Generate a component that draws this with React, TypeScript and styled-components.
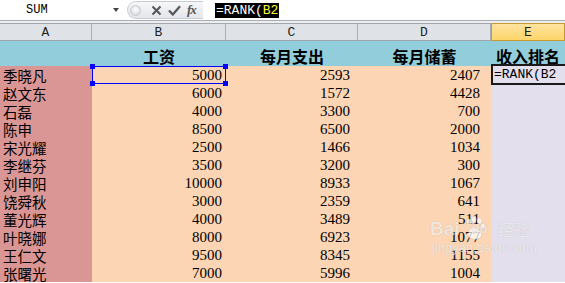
import React from "react";
import styled, { createGlobalStyle } from "styled-components";

const Global = createGlobalStyle`
  html, body { margin: 0; padding: 0; background: #fff; overflow: hidden; }
  body { width: 565px; height: 283px; font-family: "Noto Sans CJK SC", "Liberation Sans", sans-serif; }
`;

const Page = styled.div`
  width: 565px;
  height: 283px;
  overflow: hidden;
  position: relative;
  display: flex;
  flex-direction: column;
`;

const FormulaBar = styled.div`
  height: 20px;
  display: flex;
  align-items: center;
  background: #fff;
  border-bottom: 1px solid #a9acb1;
`;

const NameBox = styled.div`
  width: 125px;
  height: 20px;
  display: flex;
  align-items: center;
  justify-content: space-between;
  padding: 0 6px 0 26px;
  box-sizing: border-box;
  font-family: "Liberation Mono", monospace;
  font-size: 12px;
  color: #000;
`;

const Arrow = styled.span`
  width: 0;
  height: 0;
  border-left: 3.5px solid transparent;
  border-right: 3.5px solid transparent;
  border-top: 4px solid #444;
`;

const Pill = styled.div`
  width: 76px;
  height: 18px;
  margin-left: 2px;
  border-radius: 9px 0 0 9px;
  background: linear-gradient(#f6f7f9, #e3e6ea);
  border: 1px solid #c8ccd2;
  border-right: none;
  display: flex;
  align-items: center;
  box-sizing: border-box;
  padding-left: 2px;
  gap: 6px;
`;

const Knob = styled.span`
  width: 11px;
  height: 11px;
  border-radius: 50%;
  background: radial-gradient(circle at 50% 40%, #fff, #cfd3d8);
  border: 1px solid #c5c9ce;
  box-sizing: border-box;
  margin-right: 4px;
`;

const Fx = styled.span`
  font-family: "Liberation Serif", serif;
  font-style: italic;
  font-weight: bold;
  font-size: 13px;
  color: #555;
  letter-spacing: -1px;
`;

const FormulaInput = styled.div`
  flex: 1;
  height: 20px;
  display: flex;
  align-items: center;
  padding-left: 12px;
`;

const Highlight = styled.span`
  background: #000;
  color: #fff;
  font-family: "Liberation Mono", monospace;
  font-size: 13px;
  line-height: 15px;
  padding: 0 1px;
`;

const Ref = styled.span`
  color: #ffff3a;
`;

const Strip = styled.div`
  height: 2px;
  background: #eceef1;
`;

const cols = "92px 134px 132px 133px 74px";

const ColHeaderRow = styled.div`
  display: grid;
  grid-template-columns: ${cols};
  height: 16px;
  border-top: 1px solid #a3a7ad;
  border-bottom: 1px solid #9ea4ab;
  background: #dfe3e8;
`;

const ColHeader = styled.div<{ $active?: boolean }>`
  display: flex;
  align-items: center;
  justify-content: center;
  font-family: "Liberation Mono", monospace;
  font-size: 13px;
  color: #222;
  border-right: 1px solid #a9aeb5;
  box-sizing: border-box;
  background: ${(p) => (p.$active ? "linear-gradient(#fde3a0, #fdd56a)" : "transparent")};
  ${(p) => (p.$active ? "border: 1px solid #c89b32; margin-top: -1px; height: 18px;" : "")}
`;

const Sheet = styled.div`
  position: relative;
  display: grid;
  grid-template-columns: ${cols};
  grid-template-rows: 25px repeat(12, 18px);
`;

const TitleCell = styled.div`
  background: #92cddc;
  display: flex;
  align-items: flex-end;
  justify-content: center;
  font-weight: bold;
  font-size: 16px;
  line-height: 18px;
  color: #000;
  padding-bottom: 1px;
  white-space: nowrap;
`;

const NameCell = styled.div`
  background: #da9694;
  display: flex;
  align-items: flex-end;
  padding-left: 3px;
  font-size: 14.5px;
  line-height: 17px;
  color: #000;
`;

const NumCell = styled.div<{ $pad: number }>`
  background: #fcd5b4;
  display: flex;
  align-items: flex-end;
  justify-content: flex-end;
  padding-right: ${(p) => p.$pad}px;
  padding-bottom: 1px;
  font-family: "Liberation Serif", serif;
  font-size: 15px;
  line-height: 15px;
  color: #000;
`;

const RankCell = styled.div`
  background: #e4dfec;
`;

const Selection = styled.div`
  position: absolute;
  left: 92px;
  top: 25px;
  width: 134px;
  height: 18px;
  box-sizing: border-box;
  border: 1.5px solid #0000ff;
`;

const Handle = styled.span<{ $x: "l" | "r"; $y: "t" | "b" }>`
  position: absolute;
  width: 5px;
  height: 5px;
  background: #0000ff;
  ${(p) => (p.$x === "l" ? "left: -3px;" : "right: -3px;")}
  ${(p) => (p.$y === "t" ? "top: -3px;" : "bottom: -3px;")}
`;

const Editor = styled.div`
  position: absolute;
  left: 491px;
  top: 23px;
  width: 76px;
  height: 21px;
  box-sizing: border-box;
  border: 2px solid #1a1a1a;
  background: #e4dfec;
  font-family: "Liberation Mono", monospace;
  font-size: 13px;
  line-height: 17px;
  padding-left: 1px;
  color: #000;
  white-space: nowrap;
`;

const Watermark = styled.div`
  position: absolute;
  left: 430px;
  top: 216px;
  display: flex;
  flex-direction: column;
  align-items: flex-start;
  color: rgba(255, 255, 255, 0.7);
  text-shadow: 0 0 1px rgba(0, 0, 0, 0.2);
  pointer-events: none;
`;

const WmTop = styled.div`
  display: flex;
  align-items: flex-end;
  gap: 4px;
  font-family: "Liberation Sans", sans-serif;
  font-weight: bold;
  font-size: 19px;
  line-height: 22px;
`;

const WmDu = styled.span`
  margin-left: -18px;
  font-size: 13px;
`;

const WmCn = styled.span`
  font-family: "Noto Sans CJK SC", sans-serif;
  font-size: 16px;
  font-weight: normal;
  margin-left: 6px;
`;

const WmUrl = styled.div`
  font-family: "Liberation Sans", sans-serif;
  font-size: 13px;
  line-height: 16px;
  margin-left: 2px;
`;

const data: [string, number, number, number][] = [
  ["季晓凡", 5000, 2593, 2407],
  ["赵文东", 6000, 1572, 4428],
  ["石磊", 4000, 3300, 700],
  ["陈申", 8500, 6500, 2000],
  ["宋光耀", 2500, 1466, 1034],
  ["李继芬", 3500, 3200, 300],
  ["刘申阳", 10000, 8933, 1067],
  ["饶舜秋", 3000, 2359, 641],
  ["董光辉", 4000, 3489, 511],
  ["叶晓娜", 8000, 6923, 1077],
  ["王仁文", 9500, 8345, 1155],
  ["张曙光", 7000, 5996, 1004],
];

export default function App() {
  return (
    <Page>
      <Global />
      <FormulaBar>
        <NameBox>
          <span>SUM</span>
          <Arrow />
        </NameBox>
        <Pill>
          <Knob />
          <svg width="11" height="11" viewBox="0 0 11 11">
            <path d="M1.5 1.5 L9.5 9.5 M9.5 1.5 L1.5 9.5" stroke="#555" strokeWidth="2" />
          </svg>
          <svg width="13" height="11" viewBox="0 0 13 11">
            <path d="M1 5.5 L4.8 9.5 L12 1.2" stroke="#555" strokeWidth="2.2" fill="none" />
          </svg>
          <Fx>fx</Fx>
        </Pill>
        <FormulaInput>
          <Highlight>
            =RANK(<Ref>B2</Ref>
          </Highlight>
        </FormulaInput>
      </FormulaBar>
      <Strip />
      <ColHeaderRow>
        <ColHeader>A</ColHeader>
        <ColHeader>B</ColHeader>
        <ColHeader>C</ColHeader>
        <ColHeader>D</ColHeader>
        <ColHeader $active>E</ColHeader>
      </ColHeaderRow>
      <Sheet>
        <TitleCell />
        <TitleCell>工资</TitleCell>
        <TitleCell>每月支出</TitleCell>
        <TitleCell>每月储蓄</TitleCell>
        <TitleCell>收入排名</TitleCell>
        {data.map(([name, a, b, c]) => (
          <React.Fragment key={name}>
            <NameCell>{name}</NameCell>
            <NumCell $pad={4}>{a}</NumCell>
            <NumCell $pad={8}>{b}</NumCell>
            <NumCell $pad={11}>{c}</NumCell>
            <RankCell />
          </React.Fragment>
        ))}
        <Selection>
          <Handle $x="l" $y="t" />
          <Handle $x="r" $y="t" />
          <Handle $x="l" $y="b" />
          <Handle $x="r" $y="b" />
        </Selection>
        <Editor>=RANK(B2</Editor>
      </Sheet>
      <Watermark>
        <WmTop>
          <span>Bai</span>
          <svg width="22" height="24" viewBox="0 0 22 24">
            <g fill="rgba(255,255,255,0.7)" stroke="rgba(0,0,0,0.15)" strokeWidth="0.6">
              <ellipse cx="5" cy="6" rx="2.5" ry="3.2" />
              <ellipse cx="10" cy="3.5" rx="2.5" ry="3.2" />
              <ellipse cx="15.5" cy="5" rx="2.5" ry="3.2" />
              <ellipse cx="19" cy="10" rx="2.2" ry="2.8" />
              <path d="M4 20 C4 13 8 10 12 12 C16 14 19 17 17 21 C15 24 6 24 4 20 Z" />
            </g>
          </svg>
          <WmDu>du</WmDu>
          <WmCn>经验</WmCn>
        </WmTop>
        <WmUrl>jingyan.baidu.com</WmUrl>
      </Watermark>
    </Page>
  );
}
